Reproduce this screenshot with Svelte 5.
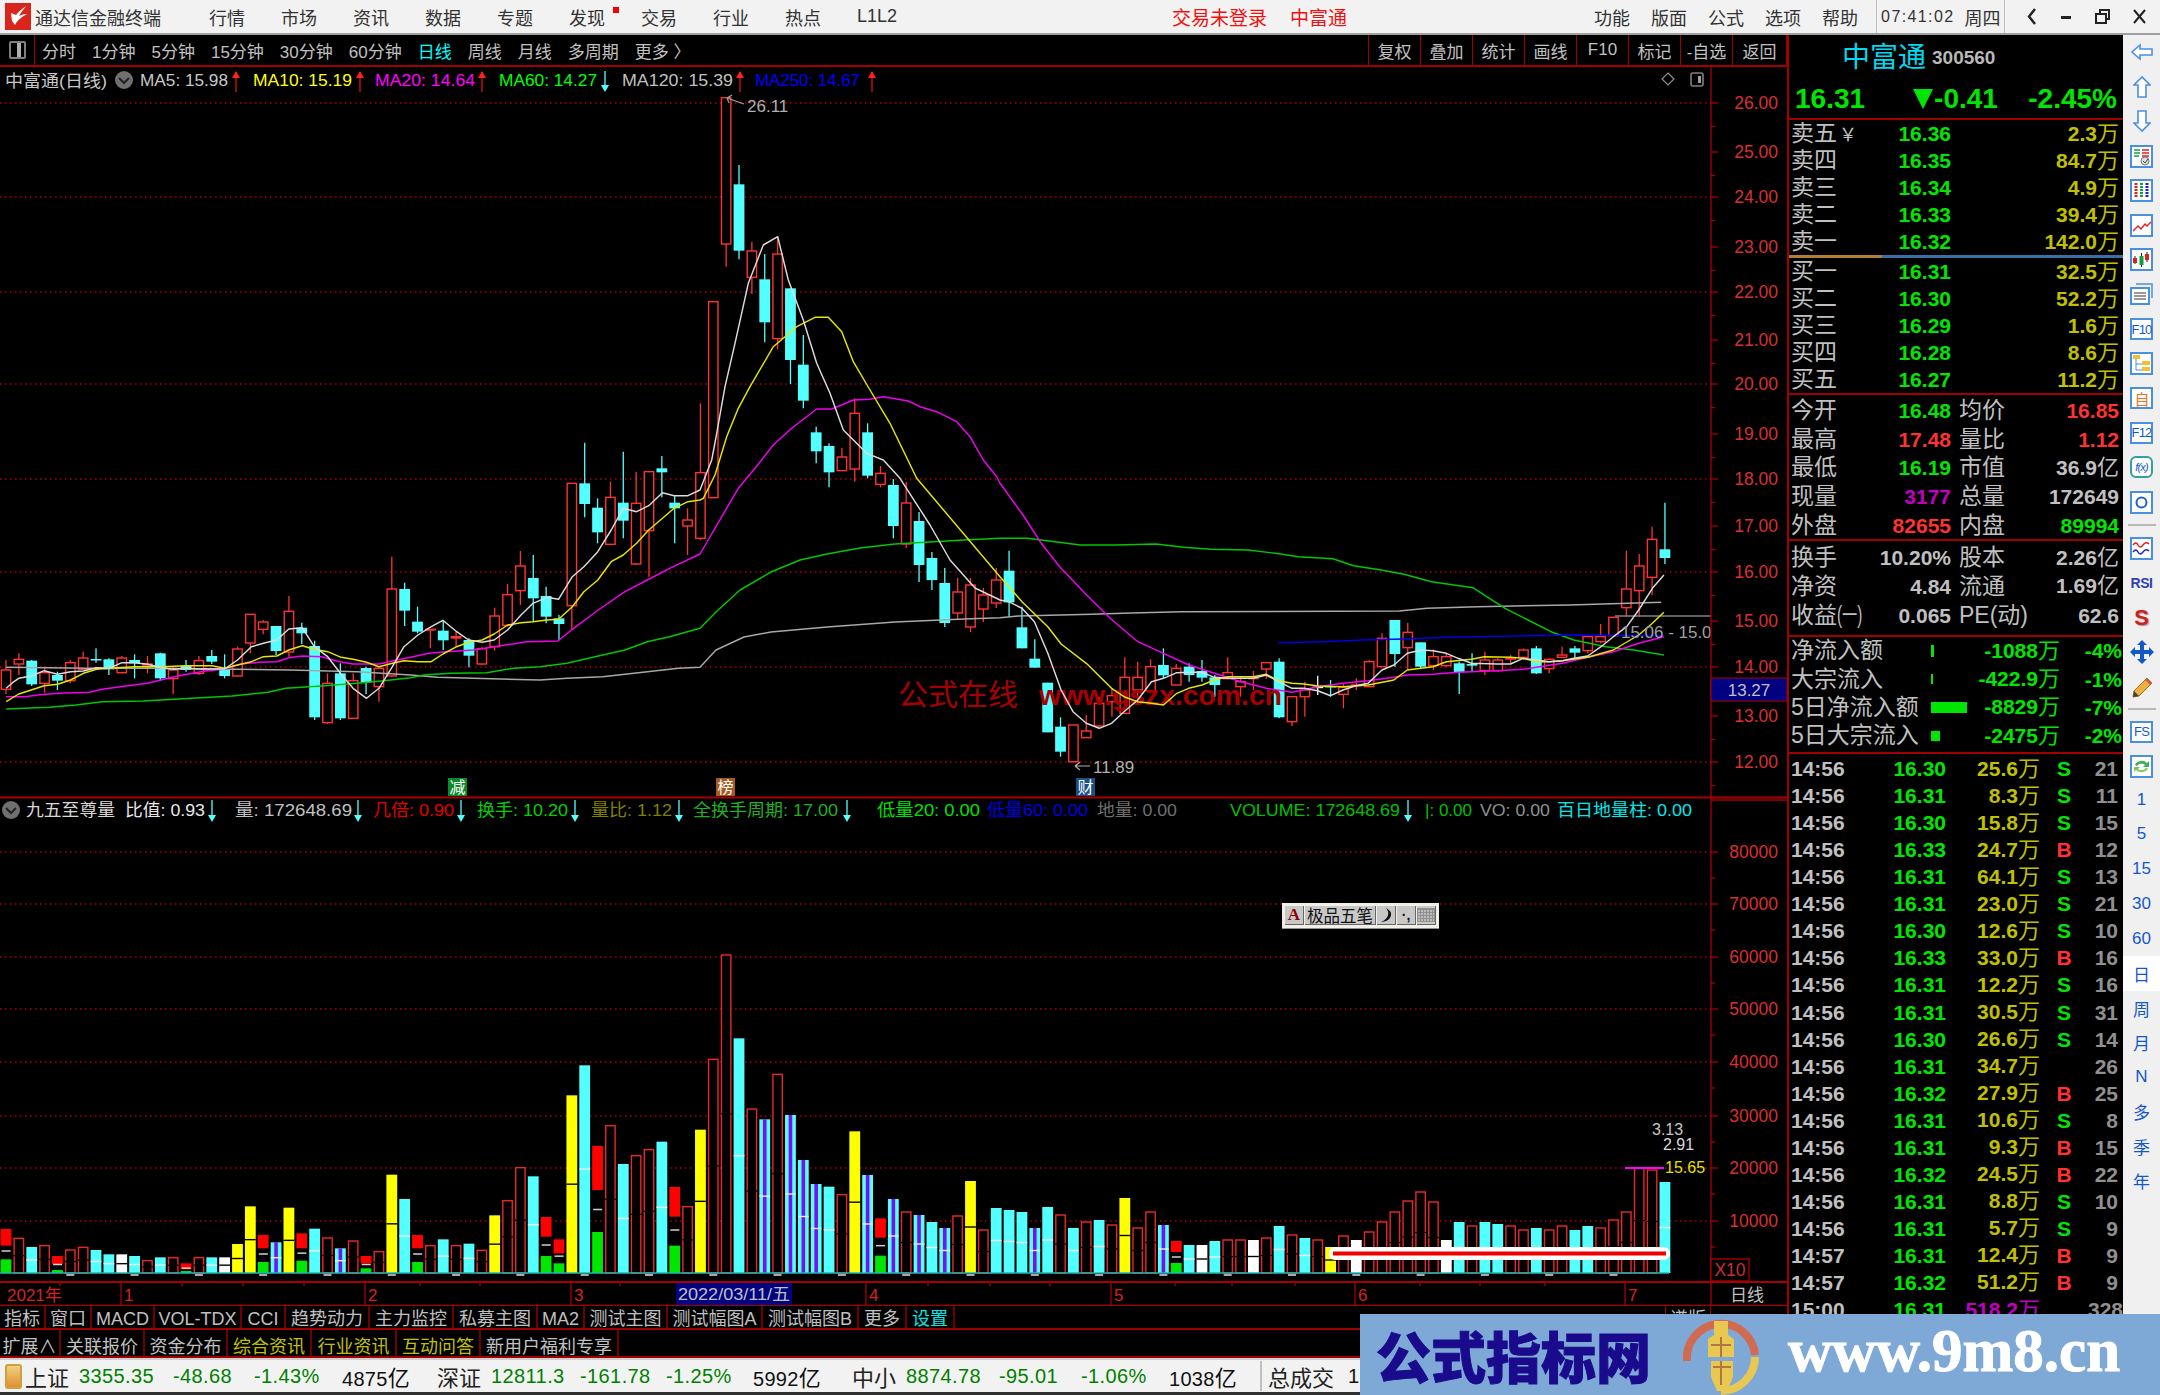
<script>
  // pixel helpers: candle x position and the price / volume grids
  const cx = (i) => 6 + i * 12.86;

  function sec(base, scale, rows) {
    return rows.map(([c, hi, top, bot, lo]) => ({
      c, hi: base + hi * scale, top: base + top * scale, bot: base + bot * scale, lo: base + lo * scale
    }));
  }

  const candles = [
    ...sec(440, 1 / 3, [
      [0,660,690,748,762],[0,640,658,672,705],[1,660,662,733,738],[0,680,698,730,758],[1,695,705,722,750],
      [0,660,668,722,730],[0,635,654,688,690],[1,625,657,660,668],[1,655,658,688,705],[0,648,654,698,700],
      [1,643,660,670,715],[0,648,672,675,700],[1,638,640,715,722],[0,678,690,716,762],[1,660,677,690,695],
      [0,648,662,700,705],[1,630,648,665,672],[1,643,690,708,715],[0,620,627,708,710],[0,522,523,609,640],
      [0,540,546,568,583],[1,558,558,633,645],[0,468,514,636,650],[1,548,563,580,612],[1,602,618,832,840],
      [0,700,730,848,852],[1,670,700,835,840],[0,700,722,835,835],[1,680,684,728,762],[0,680,685,740,785],
      [0,350,447,708,712],[1,428,447,512,558],[1,500,545,575,580],[0,568,568,570,625],[1,540,572,601,630],
      [0,575,590,594,620],[1,595,600,647,682],[0,622,626,672,675],[0,503,528,620,632],[0,432,464,556,560],
      [0,333,378,452,495],[1,345,414,475,545],[1,440,468,530,550],[1,525,535,552,600],[0,130,130,497,568],
      [1,8,130,192,232],[1,175,203,277,310],[0,125,172,313,315],[1,35,188,242,295],[0,95,190,372,375],
      [0,95,95,272,410],[1,48,85,97,172],[1,165,188,205,310],[0,205,240,258,345],[0,-110,98,295,300]
    ]),
    ...sec(80, 1 / 3, [
      [0,665,665,1253,1255],[0,53,53,492,560],[1,255,313,512,538],[0,485,513,592,642],[1,522,598,727,787],
      [0,470,522,776,808],[1,625,625,840,912],[1,765,854,962,985],[1,1040,1057,1114,1150],[1,1090,1098,1177,1222],
      [0,1103,1131,1172,1172],[0,955,1000,1167,1205],[1,1030,1057,1187,1195],[0,1158,1180,1213,1222],[1,1197,1215,1338,1375]
    ]),
    ...sec(0, 1, [
      [0,482,503,544,548],[1,512,521,565,582],[1,552,558,580,590],[1,568,583,623,627],
      [0,578,592,613,620],[0,578,585,627,632],[0,588,595,609,622],[0,568,580,603,608]
    ]),
    ...sec(440, 1 / 3, [
      [1,332,392,487,530],[1,500,562,625,625],[1,598,656,683,683],[1,728,728,877,877],[1,832,860,935,950],
      [0,855,855,965,968],[0,825,873,893,893],[0,770,790,858,860],[0,745,767,785,830],[0,652,712,820,822],
      [0,665,712,750,790],[0,658,680,752,755],[1,625,675,706,715],[0,672,685,735,735],[1,670,680,705,725],
      [1,660,693,713,725],[1,705,712,735,770],[0,652,698,716,718],[0,708,725,740,770],[0,693,715,716,750],
      [0,665,668,687,716],[1,655,665,832,835],[0,768,770,845,858],[0,725,750,770,830],[2,707,740,742,765],
      [1,720,738,742,770],[0,733,742,763,805],[0,715,735,737,750],[0,660,665,740,742],[0,580,595,680,682],
      [1,540,540,642,680],[0,548,577,623,688],[1,607,607,680,685],[0,628,650,677,690],[0,640,650,677,680],
      [1,665,670,697,762],[1,640,672,677,695],[0,635,660,692,705],[0,655,660,692,695],[0,645,655,657,670],
      [0,625,630,652,660],[1,618,625,700,702],[0,655,658,686,700],[0,620,645,652,655],[1,618,625,638,655],
      [0,590,590,632,640],[0,552,590,605,610],[0,530,532,587,590],[0,332,447,503,530],[0,342,378,452,530],
      [0,260,298,412,465],[1,188,328,354,372]
    ])
  ];

  // polylines are read off three zoom windows, so each part has its own mapping
  const p10 = (a) => a.map(([x, y]) => [x / 2.24, 440 + y / 3]);
  const p9 = (a) => a.map(([x, y]) => [600 + x / 3, 80 + y / 3]);
  const p11 = (a) => a.map(([x, y]) => [1000 + x / 2.178, 440 + y / 3]);

  function stitch(...parts) {
    const out = [];
    for (const part of parts) {
      for (const pt of part) {
        if (!out.length || pt[0] > out[out.length - 1][0]) out.push(pt);
      }
    }
    return out.map(([x, y]) => x.toFixed(1) + ',' + y.toFixed(1)).join(' ');
  }

  const lines = [
    { color: '#a8a8a8', points: stitch(
      p10([[14,682],[200,685],[350,685],[650,690],[800,695],[920,705],[980,712],[1060,715],[1210,720],[1270,715],[1350,710],[1420,700],[1520,685],[1568,682]]),
      [[716,650],[744,637],[771,632],[827,627],[895,622],[964,619]],
      p11([[0,533],[40,528],[200,523],[285,519],[395,515],[870,513],[930,505],[1040,500],[1240,495],[1440,487]])
    ) },
    { color: '#00c800', points: stitch(
      p10([[14,807],[110,802],[170,795],[229,785],[320,783],[430,775],[520,768],[600,757],[640,745],[720,738],[800,730],[860,722],[920,713],[950,705],[1010,700],[1090,698],[1150,685],[1210,680],[1270,670],[1340,648],[1400,630],[1450,605],[1500,590],[1568,565]]),
      [[716,612],[740,590],[771,572],[800,560],[827,554],[860,548],[895,544],[964,540]],
      p11([[0,295],[60,295],[120,305],[175,315],[250,315],[340,312],[400,322],[460,328],[540,330],[600,340],[650,350],[725,356],[770,377],[830,390],[880,403],[940,425],[1030,443],[1060,470],[1100,505],[1150,540],[1200,575],[1250,600],[1320,620],[1380,630],[1446,645]])
    ) },
    { color: '#0000e0', points: stitch(p11([[605,608],[705,605],[790,600],[880,597],[980,592],[1155,587],[1250,585],[1446,587]])) },
    { color: '#f000f0', points: stitch(
      p10([[14,770],[56,770],[85,765],[129,760],[200,757],[229,748],[270,740],[330,730],[400,707],[460,693],[500,688],[540,672],[580,667],[620,665],[647,653],[677,648],[720,650],[760,665],[791,672],[850,672],[879,663],[920,652],[960,640],[1000,635],[1060,630],[1100,622],[1180,605],[1250,603],[1282,568],[1340,510],[1400,455],[1450,420],[1500,385],[1568,342]]),
      p9([[415,1225],[465,1165],[520,1095],[575,1045],[650,987],[695,987],[760,960],[810,958],[850,950],[925,963],[960,980],[1010,995],[1070,1025],[1110,1070],[1150,1140],[1190,1190]]),
      p11([[0,130],[50,225],[90,310],[130,380],[185,460],[240,535],[300,605],[356,640],[411,675],[467,700],[525,725],[580,745],[636,757],[692,740],[747,730],[802,722],[858,712],[887,705],[943,703],[998,697],[1083,692],[1139,688],[1168,682],[1225,670],[1280,652],[1336,635],[1391,610],[1446,590]])
    ) },
    { color: '#e6e600', points: stitch(
      p10([[14,785],[42,762],[70,750],[99,737],[129,733],[158,720],[187,700],[216,688],[244,685],[301,680],[361,680],[418,677],[475,677],[503,685],[532,675],[563,665],[590,650],[620,648],[647,630],[677,617],[704,628],[734,635],[764,652],[791,658],[821,667],[849,680],[879,670],[905,662],[936,665],[966,665],[992,642],[1023,620],[1050,607],[1080,600],[1107,582],[1137,555],[1167,548],[1194,545],[1225,540],[1251,538],[1282,500],[1308,455],[1339,420],[1369,365],[1396,345],[1426,310],[1453,270],[1484,235],[1510,205],[1541,185],[1568,180]]),
      p9([[310,1255],[345,1185],[380,1070],[415,985],[450,920],[520,800],[590,740],[645,712],[685,712],[725,755],[760,845],[810,930],[870,1030],[950,1195]]),
      p11([[0,410],[48,485],[104,560],[133,612],[188,670],[243,745],[270,770],[300,785],[330,790],[356,795],[385,760],[411,745],[440,735],[467,720],[496,710],[552,710],[580,703],[607,722],[636,730],[662,732],[692,738],[747,740],[802,735],[858,720],[887,690],[917,685],[943,680],[972,665],[1027,658],[1055,650],[1112,652],[1139,655],[1168,665],[1196,665],[1225,662],[1280,652],[1336,630],[1391,585],[1421,550],[1446,517]])
    ) },
    { color: '#dcdcdc', points: stitch(
      p10([[14,745],[28,728],[42,715],[70,708],[99,692],[129,703],[158,695],[187,693],[216,683],[244,685],[273,668],[301,668],[331,673],[361,683],[389,688],[418,685],[446,687],[475,687],[503,687],[532,660],[563,620],[590,610],[620,600],[647,567],[677,563],[704,620],[734,650],[764,703],[791,745],[821,775],[849,745],[879,680],[905,620],[936,585],[966,560],[992,541],[1023,575],[1050,600],[1080,607],[1107,600],[1137,570],[1167,525],[1194,490],[1225,472],[1251,478],[1282,410],[1308,380],[1339,335],[1369,270],[1396,205],[1426,215],[1453,197],[1484,158],[1510,167],[1541,167],[1568,150]]),
      p9([[335,1140],[350,1060],[375,920],[405,790],[445,610],[490,495],[533,470],[565,600],[610,720],[650,850],[690,940],[730,1050],[800,1120],[850,1140],[900,1195]]),
      [[930,525],[950,560],[975,588]],
      p11([[0,480],[19,485],[48,505],[75,545],[104,640],[133,750],[159,815],[188,850],[216,865],[243,850],[270,815],[300,780],[330,725],[356,715],[385,698],[411,697],[440,697],[467,712],[496,715],[552,715],[580,705],[607,725],[636,745],[662,745],[692,752],[720,767],[747,750],[775,737],[802,730],[832,690],[858,675],[887,640],[917,630],[943,632],[972,640],[998,655],[1027,670],[1083,672],[1112,672],[1139,655],[1168,660],[1196,665],[1225,662],[1250,655],[1280,648],[1309,620],[1336,590],[1365,560],[1391,510],[1421,445],[1446,405]])
    ) }
  ];

  // volume bars: type letter + top (R also has end of red part, start of green part)
  function parseBars(base, scale, str) {
    return str.split(' ').map((s) => {
      const nums = s.slice(1).split(',').map((n) => base + Number(n) * scale);
      return { t: s[0], top: nums[0], redEnd: nums[1], green: nums[2] };
    });
  }
  const bars = [
    ...parseBars(1000, 1 / 3, 'R687,737,778 r715 c741 r737 R768,792,810 r750 r742 c750 c763 w763 c768 r782 c772 r773 R790,808,813 r773 c772 w772 y732 y619 R705,745,786 p727 y623 R700,745,782 c686 r714 p745 r723 R768,790,805 r755 y524 c597 R705,745,786 r737 c718 r737 c731 r751 y646 r602 r503 c529 R651,710,768 R718,760,790 y286 c196 R438,570,696 r377 c492 r467 r449 c425 R561,650,737 r620 y389 r178 r-135 c115 r327 p358 r223 p345 p480 p552 c560 r584 y394 p525 R655,713,767 p597'),
    ...parseBars(0, 1, 'r1212 p1215 c1222 p1228 r1216 y1181 r1230 c1208 c1210 c1212 p1228 c1207 r1215 c1228 r1222 c1220 r1225 y1198 r1228 r1212 p1225 R1241,1252,1263 c1245 w1245 c1241 r1240 r1240 w1240 r1238 c1226 r1235 c1238 r1240 y1247 r1236 w1240 r1232 r1222 r1212 r1201 r1192 r1202 w1240 c1222 r1226 c1222 c1224 r1226 r1230 c1228 r1230 r1226 c1230 c1226 r1228 r1220 r1212 r1168 r1170 c1182')
  ];
  const baseY = 1273;
  const barColors = { c: '#54ffff', y: '#ffff00', w: '#ffffff', p: '#54ffff' };

  const priceGrid = [103, 197, 292, 384, 479, 572, 667, 762];
  const volGrid = [852, 904, 957, 1009, 1062, 1116, 1168, 1221];
  const priceYs = [103, 152, 197, 247, 292, 340, 384, 434, 479, 526, 572, 621, 667, 716, 762];
  const priceLabels = ['26.00','25.00','24.00','23.00','22.00','21.00','20.00','19.00','18.00','17.00','16.00','15.00','14.00','13.00','12.00']
    .map((t, i) => ({ t, y: priceYs[i] }));
  const volLabels = ['80000','70000','60000','50000','40000','30000','20000','10000'].map((t, i) => ({ t, y: volGrid[i] }));

  const maLegend = [
    { x: 140, w: 88, text: 'MA5: 15.98', color: '#c8c8c8', ax: 236, up: true },
    { x: 253, w: 99, text: 'MA10: 15.19', color: '#ffff00', ax: 360, up: true },
    { x: 375, w: 100, text: 'MA20: 14.64', color: '#ff00ff', ax: 482, up: true },
    { x: 499, w: 98, text: 'MA60: 14.27', color: '#00ff00', ax: 605, up: false },
    { x: 622, w: 111, text: 'MA120: 15.39', color: '#c0c0c0', ax: 740, up: true },
    { x: 755, w: 105, text: 'MA250: 14.67', color: '#0000ff', ax: 872, up: true }
  ];
  const volLegend = [
    { x: 26, w: 89, text: '九五至尊量', color: '#d8d8d8' },
    { x: 125, w: 80, text: '比值: 0.93', color: '#e8e8e8', ax: 212 },
    { x: 235, w: 117, text: '量: 172648.69', color: '#c0c0c0', ax: 358 },
    { x: 373, w: 81, text: '几倍: 0.90', color: '#e00000', ax: 461 },
    { x: 477, w: 91, text: '换手: 10.20', color: '#00d000', ax: 575 },
    { x: 591, w: 81, text: '量比: 1.12', color: '#808000', ax: 679 },
    { x: 693, w: 145, text: '全换手周期: 17.00', color: '#20b020', ax: 847 },
    { x: 877, w: 103, text: '低量20: 0.00', color: '#00e000' },
    { x: 987, w: 101, text: '低量60: 0.00', color: '#0000e0' },
    { x: 1097, w: 80, text: '地量: 0.00', color: '#707070' },
    { x: 1230, w: 170, text: 'VOLUME: 172648.69', color: '#00c000', ax: 1408 },
    { x: 1425, w: 47, text: '|: 0.00', color: '#00c000' },
    { x: 1480, w: 70, text: 'VO: 0.00', color: '#909090' },
    { x: 1557, w: 135, text: '百日地量柱: 0.00', color: '#00e8e8' }
  ];
  const months = [{ x: 121, t: '1' }, { x: 365, t: '2' }, { x: 571, t: '3' }, { x: 866, t: '4' }, { x: 1111, t: '5' }, { x: 1355, t: '6' }, { x: 1625, t: '7' }];
  const minorTicks = [60, 182, 243, 304, 420, 480, 620, 700, 760, 928, 990, 1050, 1175, 1232, 1295, 1420, 1480, 1545];

  const menu = ['行情', '市场', '资讯', '数据', '专题', '发现', '交易', '行业', '热点', 'L1L2'];
  const periods = ['分时', '1分钟', '5分钟', '15分钟', '30分钟', '60分钟', '日线', '周线', '月线', '多周期', '更多 〉'];
  const chartTools = ['复权', '叠加', '统计', '画线', 'F10', '标记', '-自选', '返回'];
  const tabsA = [['指标', 46], ['窗口', 46], ['MACD', 63], ['VOL-TDX', 87], ['CCI', 44], ['趋势动力', 84], ['主力监控', 84], ['私募主图', 84], ['MA2', 47], ['测试主图', 83], ['测试幅图A', 95], ['测试幅图B', 96], ['更多', 48], ['设置', 48]];
  const tabsB = [['扩展∧', 61], ['关联报价', 84], ['资金分布', 83], ['综合资讯', 84], ['行业资讯', 85], ['互动问答', 84], ['新用户福利专享', 138]];

  const asks = [['卖五', '16.36', '2.3'], ['卖四', '16.35', '84.7'], ['卖三', '16.34', '4.9'], ['卖二', '16.33', '39.4'], ['卖一', '16.32', '142.0']];
  const bids = [['买一', '16.31', '32.5'], ['买二', '16.30', '52.2'], ['买三', '16.29', '1.6'], ['买四', '16.28', '8.6'], ['买五', '16.27', '11.2']];
  const stats = [
    ['今开', '16.48', 'up0', '均价', '16.85', 'red'],
    ['最高', '17.48', 'red', '量比', '1.12', 'red'],
    ['最低', '16.19', 'up0', '市值', '36.9', 'gray', '亿'],
    ['现量', '3177', 'mag', '总量', '172649', 'gray'],
    ['外盘', '82655', 'red', '内盘', '89994', 'up0']
  ];
  const stats2 = [
    ['换手', '10.20%', '股本', '2.26', '亿'],
    ['净资', '4.84', '流通', '1.69', '亿'],
    ['收益', '0.065', 'PE(动)', '62.6', '']
  ];
  const flows = [
    ['净流入额', 3, 12, '-1088', '-4%'],
    ['大宗流入', 2, 10, '-422.9', '-1%'],
    ['5日净流入额', 36, 11, '-8829', '-7%'],
    ['5日大宗流入', 9, 10, '-2475', '-2%']
  ];
  const ticks = [
    ['14:56','16.30','25.6','S',21],['14:56','16.31','8.3','S',11],['14:56','16.30','15.8','S',15],['14:56','16.33','24.7','B',12],
    ['14:56','16.31','64.1','S',13],['14:56','16.31','23.0','S',21],['14:56','16.30','12.6','S',10],['14:56','16.33','33.0','B',16],
    ['14:56','16.31','12.2','S',16],['14:56','16.31','30.5','S',31],['14:56','16.30','26.6','S',14],['14:56','16.31','34.7','',26],
    ['14:56','16.32','27.9','B',25],['14:56','16.31','10.6','S',8],['14:56','16.31','9.3','B',15],['14:56','16.32','24.5','B',22],
    ['14:56','16.31','8.8','S',10],['14:56','16.31','5.7','S',9],['14:57','16.31','12.4','B',9],['14:57','16.32','51.2','B',9],
    ['15:00','16.31','518.2','',328]
  ];
  const periodBtns = [
    { t: '1', h: 34 }, { t: '5', h: 34 }, { t: '15', h: 36 }, { t: '30', h: 34 }, { t: '60', h: 35 },
    { t: '日', h: 35, on: true }, { t: '周', h: 34 }, { t: '月', h: 35 }, { t: 'N', h: 34 }, { t: '多', h: 35 }, { t: '季', h: 34 }, { t: '年', h: 34 }
  ];
  const indexes = [
    { name: '上证', w: 412, vals: [['3355.35', 77], ['-48.68', 64], ['-1.43%', 71]], amt: '4875' },
    { name: '深证', w: 415, vals: [['12811.3', 72], ['-161.78', 69], ['-1.25%', 70]], amt: '5992' },
    { name: '中小', w: 408, vals: [['8874.78', 76], ['-95.01', 65], ['-1.06%', 71]], amt: '1038' }
  ];
</script>

<div class="app">
  <header class="menubar">
    <svg class="logo" width="26" height="27" viewBox="0 0 26 27">
      <rect width="26" height="27" fill="#d8261c" />
      <path d="M21 3 C17 6 13 9 11 12 L6 10 L7 18 L10 22 C12 18 15 15 22 11 C18 11 16 12 14 13 C16 9 19 6 21 3 Z" fill="#fff" />
    </svg>
    <span class="apptitle">通达信金融终端</span>
    <nav class="menu">
      {#each menu as m}
        <span class="menuitem">{m}{#if m === '发现'}<i class="reddot"></i>{/if}</span>
      {/each}
    </nav>
    <span class="login">交易未登录</span>
    <span class="login stock">中富通</span>
    <nav class="menu2">
      {#each ['功能', '版面', '公式', '选项', '帮助'] as m}<span>{m}</span>{/each}
    </nav>
    <div class="clock"><span class="time">07:41:02</span><span>周四</span></div>
    <div class="winbtns">
      <svg width="10" height="17" viewBox="0 0 10 17"><path d="M8 1L2 8.500 8 16" fill="none" stroke="#222" stroke-width="2.400" /></svg>
      <svg width="12" height="12" viewBox="0 0 12 12"><rect x="1" y="5" width="10" height="3" fill="#222" /></svg>
      <svg width="15" height="15" viewBox="0 0 15 15"><path d="M5 1h9v9h-3v4H1V5h4z" fill="none" stroke="#222" stroke-width="2" /><path d="M5 5h6v5" fill="none" stroke="#222" stroke-width="2" /></svg>
      <svg width="13" height="15" viewBox="0 0 13 15"><path d="M1 1l11 13M12 1L1 14" stroke="#222" stroke-width="2" fill="none" /></svg>
    </div>
  </header>

  <div class="main">
    <section class="left">
      <div class="toolbar">
        <div class="framebtn"><span class="frameicon"></span></div>
        <div class="periods">
          {#each periods as p}<span class:active={p === '日线'}>{p}</span>{/each}
        </div>
        <div class="charttools">
          {#each chartTools as t}<span>{t}</span>{/each}
        </div>
      </div>

      <svg class="chart" width="1787" height="1239" viewBox="0 67 1787 1239">
        <defs><clipPath id="plot"><rect x="0" y="67" width="1711" height="1239" /></clipPath></defs>
        {#each priceGrid as y}<line x1="0" x2="1711" y1={y} y2={y} class="grid" />{/each}
        {#each volGrid as y}<line x1="0" x2="1711" y1={y} y2={y} class="grid" />{/each}

        <!-- candles -->
        {#each candles as k, i}
          <line x1={cx(i)} x2={cx(i)} y1={k.hi} y2={k.lo} stroke={k.c === 1 ? '#54ffff' : k.c === 2 ? '#fff' : '#ff3232'} stroke-width="1.3" />
          {#if k.c === 0}
            <rect x={cx(i) - 4.7} y={k.top} width="9.4" height={k.bot - k.top} fill="#000" stroke="#ff3232" stroke-width="1.4" />
          {:else}
            <rect x={cx(i) - 5.4} y={k.top} width="10.8" height={Math.max(k.bot - k.top, 1.5)} fill={k.c === 1 ? '#54ffff' : '#fff'} />
          {/if}
        {/each}

        <text x="898" y="705" class="wm1">公式在线</text>
        <text x="1039" y="705" class="wm2" textLength="243" lengthAdjust="spacingAndGlyphs">www.gszx.com.cn</text>

        <line x1="1615" x2="1711" y1="616" y2="616" stroke="#808080" stroke-width="1.3" />
        {#each lines as l}
          <polyline points={l.points} fill="none" stroke={l.color} stroke-width="1.45" stroke-linejoin="round" />
        {/each}

        <path d="M727 98 L744 104 M727 98 l5 -3 M727 98 l2 5" stroke="#a0a0a0" fill="none" stroke-width="1.2" />
        <text x="747" y="112" class="t17" fill="#b0b0b0">26.11</text>
        <path d="M1075 766 H1090 M1075 766 l5 -4 M1075 766 l5 4" stroke="#b0b0b0" fill="none" stroke-width="1.2" />
        <text x="1093" y="773" class="t17" fill="#b0b0b0">11.89</text>
        <text x="1621" y="638" class="t17" fill="#a0a0a0" clip-path="url(#plot)" textLength="100" lengthAdjust="spacingAndGlyphs">15.06 - 15.06</text>

        <rect x="448" y="778" width="19" height="18" fill="#0a8a28" />
        <text x="457.5" y="793" class="mark">减</text>
        <rect x="716" y="778" width="19" height="18" fill="#a55a20" />
        <text x="725.5" y="793" class="mark">榜</text>
        <rect x="1076" y="778" width="19" height="18" fill="#1c4f86" />
        <text x="1085.5" y="793" class="mark">财</text>

        <!-- legends -->
        <text x="5" y="87" class="cn" fill="#c8c8c8" textLength="102" lengthAdjust="spacingAndGlyphs">中富通(日线)</text>
        <circle cx="124" cy="80" r="9" fill="#707070" />
        <path d="M119 78l5 5 5-5" stroke="#222" stroke-width="2" fill="none" />
        {#each maLegend as m}
          <text x={m.x} y="86" class="t17" fill={m.color} textLength={m.w} lengthAdjust="spacingAndGlyphs">{m.text}</text>
          {#if m.up}
            <path d="M{m.ax} 92V72" stroke="#e01010" stroke-width="1.3" /><path d="M{m.ax - 4} 78L{m.ax} 71L{m.ax + 4} 78Z" fill="#ff2020" />
          {:else}
            <path d="M{m.ax} 71V90" stroke="#54ffff" stroke-width="1.3" /><path d="M{m.ax - 4} 85L{m.ax} 92L{m.ax + 4} 85Z" fill="#54ffff" />
          {/if}
        {/each}
        <path d="M1668 73l6 6-6 6-6-6z" fill="none" stroke="#909090" stroke-width="1.2" />
        <rect x="1691" y="73" width="12" height="13" rx="2" fill="none" stroke="#808080" stroke-width="1.6" />
        <rect x="1698" y="76" width="3" height="7" fill="#a0a0a0" />

        <circle cx="11" cy="810" r="9" fill="#707070" />
        <path d="M6 808l5 5 5-5" stroke="#222" stroke-width="2" fill="none" />
        {#each volLegend as m}
          <text x={m.x} y="816" class="t17" fill={m.color} textLength={m.w} lengthAdjust="spacingAndGlyphs">{m.text}</text>
          {#if m.ax}
            <path d="M{m.ax} 800V819" stroke="#54ffff" stroke-width="1.3" /><path d="M{m.ax - 4} 815L{m.ax} 822L{m.ax + 4} 815Z" fill="#54ffff" />
          {/if}
        {/each}

        <!-- volume bars -->
        {#each bars as b, i}
          {@const x = cx(i) - 5.4}
          {@const mid = (b.top + baseY) / 2}
          {#if b.t === 'r'}
            <rect x={x + 0.7} y={b.top} width="9.4" height={baseY - b.top} fill="#000" stroke="#e82828" stroke-width="1.4" />
            <line x1={x} x2={x + 11} y1={mid} y2={mid} stroke="#000" stroke-width="1.2" />
          {:else if b.t === 'R'}
            <rect x={x} y={b.top} width="10.8" height={b.redEnd - b.top} fill="#ff0000" />
            <rect x={x} y={b.green} width="10.8" height={baseY - b.green} fill="#00e600" />
            <line x1={x + 1} x2={x + 10} y1={mid} y2={mid} stroke="#d0d0d0" stroke-width="1.5" />
          {:else}
            <rect x={x} y={b.top} width="10.8" height={baseY - b.top} fill={barColors[b.t]} />
            {#if b.t === 'p'}<rect x={x + 3.6} y={b.top} width="3.6" height={baseY - b.top} fill="#7a10f0" />{/if}
            <line x1={x} x2={x + 10.8} y1={mid} y2={mid} stroke={b.t === 'c' || b.t === 'p' ? '#f0f0f0' : '#000'} stroke-width="1.4" />
          {/if}
          {#if i % 5 === 0 && i > 0}
            <line x1={cx(i) - 4} x2={cx(i) + 4} y1="1275" y2="1275" stroke="#e0e0e0" stroke-width="1.5" />
          {/if}
        {/each}
        <line x1="0" x2="1669" y1="1273" y2="1273" stroke="#20b8b8" stroke-width="1.4" />

        <rect x="1329" y="1247" width="341" height="13" rx="6" fill="#ffffff" />
        <rect x="1333" y="1251.5" width="333" height="4" fill="#f00000" />
        <line x1="1625" x2="1664" y1="1168" y2="1168" stroke="#ff00ff" stroke-width="1.8" />
        <text x="1652" y="1135" class="t16" fill="#c8c8c8">3.13</text>
        <text x="1663" y="1150" class="t16" fill="#d8d8d8">2.91</text>
        <text x="1665" y="1173" class="t16" fill="#e0e000">15.65</text>

        <!-- right axis -->
        <line x1="1711" x2="1711" y1="67" y2="1306" class="axis" />
        <line x1="0" x2="1787" y1="797.5" y2="797.5" class="axis thick" />
        <line x1="1711" x2="1787" y1="800" y2="800" class="axis" />
        {#each priceLabels as l}
          <line x1="1711" x2="1718" y1={l.y} y2={l.y} class="axis" />
          <line x1="1711" x2="1715" y1={l.y + 23.5} y2={l.y + 23.5} class="axis" />
          <text x="1778" y={l.y + 6} class="axlabel">{l.t}</text>
        {/each}
        {#each volLabels as l}
          <line x1="1711" x2="1718" y1={l.y} y2={l.y} class="axis" />
          <line x1="1711" x2="1715" y1={l.y + 26} y2={l.y + 26} class="axis" />
          <text x="1778" y={l.y + 6} class="axlabel">{l.t}</text>
        {/each}
        <rect x="1711" y="678" width="76" height="23" fill="#000080" stroke="#b00000" />
        <text x="1749" y="696" class="t17 mid" fill="#c0c0c0">13.27</text>
        <rect x="1711" y="1259" width="38" height="22" fill="#000" stroke="#b00000" stroke-width="1.3" />
        <text x="1730" y="1276" class="axlabel mid" fill="#c83030">X10</text>

        <!-- date axis -->
        <line x1="0" x2="1787" y1="1282" y2="1282" class="axis thick" />
        <line x1="0" x2="1787" y1="1305.5" y2="1305.5" class="axis" />
        {#each minorTicks as x}<line x1={x} x2={x} y1="1282" y2="1286" class="axis" />{/each}
        <text x="7" y="1301" class="date">2021年</text>
        {#each months as m}
          <line x1={m.x} x2={m.x} y1="1282" y2="1306" class="axis" />
          <text x={m.x + 3} y="1301" class="date">{m.t}</text>
        {/each}
        <rect x="676" y="1283" width="116" height="22" fill="#000080" />
        <text x="678" y="1300" class="t17" fill="#c0c0c0" textLength="112" lengthAdjust="spacingAndGlyphs">2022/03/11/五</text>
        <text x="1747" y="1301" class="cn mid" fill="#c0c0c0">日线</text>
      </svg>

      <div class="tabs">
        {#each tabsA as [t, w]}<span class:cyan={t === '设置'} style="width:{w}px">{t}</span>{/each}
        <span class="hidden-tab">谱版</span>
      </div>
      <div class="tabs second">
        {#each tabsB as [t, w], i}<span class:olive={i >= 3 && i <= 5} style="width:{w}px">{t}</span>{/each}
      </div>
    </section>

    <aside class="panel">
      <div class="name"><span class="zh">中富通</span><span class="code">300560</span></div>
      <div class="last">
        <span class="big">16.31</span>
        <span class="big chg"><i class="tri"></i>-0.41</span>
        <span class="big">-2.45%</span>
      </div>
      {#each asks as r, i}
        <div class="order"><span class="lbl">{r[0]}{#if i === 0}<em class="yen">￥</em>{/if}</span><b class="up0">{r[1]}</b><b class="vol">{r[2]}<span class="wan">万</span></b></div>
      {/each}
      <div class="split"></div>
      {#each bids as r}
        <div class="order"><span class="lbl">{r[0]}</span><b class="up0">{r[1]}</b><b class="vol">{r[2]}<span class="wan">万</span></b></div>
      {/each}
      <div class="stats line">
        {#each stats as r}
          <div class="stat"><span class="lbl">{r[0]}</span><b class={r[2]}>{r[1]}</b><span class="lbl l2">{r[3]}</span><b class={r[5]}>{r[4]}{#if r[6]}<span class="wan">{r[6]}</span>{/if}</b></div>
        {/each}
      </div>
      <div class="stats line extra">
        {#each stats2 as r, i}
          <div class="stat"><span class="lbl">{r[0]}{#if i === 2}<span class="paren">(一)</span>{/if}</span><b class="gray">{r[1]}</b><span class="lbl l2">{r[2]}</span><b class="gray">{r[3]}{#if r[4]}<span class="wan">{r[4]}</span>{/if}</b></div>
        {/each}
      </div>
      <div class="flows line">
        {#each flows as r}
          <div class="flow"><span class="lbl">{r[0]}</span><span class="barcell"><i style="width:{r[1]}px;height:{r[2]}px"></i></span><b class="up0">{r[3]}<span class="wan">万</span></b><b class="up0">{r[4]}</b></div>
        {/each}
      </div>
      <div class="ticks line">
        {#each ticks as r, i}
          <div class="tick">
            <b class="gray">{r[0]}</b>
            <b class="up0">{r[1]}</b>
            <b class={i === 20 ? 'mag' : 'yel'}>{r[2]}<span class="wan">万</span></b>
            <b class={r[3] === 'B' ? 'red' : 'up0'}>{r[3]}</b>
            <b class="dim">{r[4]}</b>
          </div>
        {/each}
      </div>
    </aside>

    <aside class="tools">
      <span class="tool"><svg width="24" height="18" viewBox="0 0 24 18"><path d="M10 2L2 9l8 7v-4h12V6H10z" fill="#fff" stroke="#4a90e0" stroke-width="1.6" /></svg></span>
      <span class="tool"><svg width="18" height="24" viewBox="0 0 18 24"><path d="M9 2L1 10h4v12h8V10h4z" fill="#fff" stroke="#4a90e0" stroke-width="1.6" /></svg></span>
      <span class="tool"><svg width="18" height="24" viewBox="0 0 18 24"><path d="M9 22L1 14h4V2h8v12h4z" fill="#fff" stroke="#4a90e0" stroke-width="1.6" /></svg></span>
      <span class="tool"><svg width="23" height="23" viewBox="0 0 23 23"><rect x="1" y="1" width="21" height="21" class="ibox" /><path d="M4 5h6M4 8h6M4 11h5" stroke="#10a040" stroke-width="1.5" /><path d="M12 5h7M12 8h7M12 11h7" stroke="#e02020" stroke-width="1.5" /><circle cx="15" cy="16" r="4" fill="#ddd" stroke="#777" /><path d="M13 16l2 2 3-4" stroke="#444" fill="none" /></svg></span>
      <span class="tool"><svg width="23" height="23" viewBox="0 0 23 23"><rect x="1" y="1" width="21" height="21" class="ibox" /><path d="M6 4v15" stroke="#e02020" stroke-width="3" stroke-dasharray="2 1" /><path d="M11.500 4v15" stroke="#10a040" stroke-width="3" stroke-dasharray="2 1" /><path d="M17 4v15" stroke="#2020d0" stroke-width="3" stroke-dasharray="2 1" /></svg></span>
      <span class="tool"><svg width="23" height="23" viewBox="0 0 23 23"><rect x="1" y="1" width="21" height="21" class="ibox" /><path d="M3 17l5-5 3 3 4-5 2 2 4-4" stroke="#e02020" fill="none" stroke-width="1.4" /></svg></span>
      <span class="tool"><svg width="23" height="23" viewBox="0 0 23 23"><rect x="1" y="1" width="21" height="21" class="ibox" /><path d="M5 8v8M11.500 5v14M17 4v10" stroke="#222" /><rect x="3" y="10" width="4" height="5" fill="#e02020" /><rect x="9.500" y="8" width="4" height="9" fill="#10a040" /><rect x="15" y="6" width="4" height="6" fill="#e02020" /></svg></span>
      <span class="tool"><svg width="23" height="23" viewBox="0 0 23 23"><path d="M6 1h16v14" fill="none" stroke="#4a90e0" stroke-width="1.5" /><rect x="1" y="5" width="18" height="16" class="ibox" /><path d="M4 10h12M4 13h12M4 16h12" stroke="#777" stroke-width="1.5" /></svg></span>
      <span class="tool"><span class="tbox">F10</span></span>
      <span class="tool"><svg width="23" height="23" viewBox="0 0 23 23"><rect x="1" y="1" width="21" height="21" class="ibox" /><path d="M6 7v11h6M6 12h6" stroke="#4a90e0" fill="none" /><rect x="3" y="3" width="7" height="4" fill="#f0c030" /><rect x="12" y="9" width="8" height="4" fill="#f0c030" /><rect x="12" y="15" width="8" height="4" fill="#f0c030" /></svg></span>
      <span class="tool"><span class="tbox orange">自</span></span>
      <span class="tool"><span class="tbox">F12</span></span>
      <span class="tool"><span class="tbox fx">f(x)</span></span>
      <span class="tool"><svg width="23" height="23" viewBox="0 0 23 23"><rect x="1" y="1" width="21" height="21" class="ibox" /><circle cx="11.500" cy="11.500" r="5" fill="none" stroke="#2060d0" stroke-width="2" /></svg></span>
      <span class="sep"></span>
      <span class="tool"><svg width="23" height="23" viewBox="0 0 23 23"><rect x="1" y="1" width="21" height="21" class="ibox" /><path d="M3 8q3-4 5 0t5 0 6-1" stroke="#e02020" fill="none" stroke-width="1.4" /><path d="M3 15q3-4 5 0t5 0 6-1" stroke="#2020d0" fill="none" stroke-width="1.4" /></svg></span>
      <span class="tool"><span class="rsi">RSI</span></span>
      <span class="tool"><span class="sbig">S</span></span>
      <span class="tool"><svg width="26" height="26" viewBox="0 0 26 26"><path d="M13 1l5 5h-3v5h5V8l5 5-5 5v-3h-5v5h3l-5 5-5-5h3v-5H6v3l-5-5 5-5v3h5V6H8z" fill="#1458c8" /></svg></span>
      <span class="tool"><svg width="24" height="24" viewBox="0 0 24 24"><path d="M3 22l1-6L17 3l5 5L9 21z" fill="#f0b040" stroke="#a07020" /><path d="M17 3l5 5 -2 2-5-5z" fill="#d06040" /><path d="M3 22l1-6 5 5z" fill="#444" /></svg></span>
      <span class="sep second"></span>
      <span class="tool"><span class="tbox">FS</span></span>
      <span class="tool"><svg width="23" height="23" viewBox="0 0 23 23"><rect x="1" y="1" width="21" height="21" class="ibox" /><path d="M5 10a7 6 0 0 1 12-2l2-2v6h-6l2-2a5 4 0 0 0-8 1z" fill="#40b060" /><path d="M18 13a7 6 0 0 1-12 2l-2 2v-5h6l-2 2a5 4 0 0 0 8-1z" fill="#80c850" /></svg></span>
      {#each periodBtns as p}
        <span class="ptool" class:on={p.on} style="height:{p.h}px"><em>{p.t}</em></span>
      {/each}
    </aside>
  </div>

  <footer class="status">
    <span class="sicon"></span>
    {#each indexes as ix}
      <div class="idx" style="width:{ix.w}px">
        <span class="nm">{ix.name}</span>
        {#each ix.vals as [v, w]}<span class="g" style="width:{w}px">{v}</span>{/each}
        <span class="amt">{ix.amt}<span class="yi">亿</span></span>
      </div>
    {/each}
    <div class="total"><span class="nm">总成交</span><span class="amt">1</span></div>
  </footer>

  <!-- floating input-method bar -->
  <div class="ime">
    <span class="imebtn a">A</span>
    <span class="imebtn wide">极品五笔</span>
    <span class="imebtn"><svg width="12" height="15" viewBox="0 0 12 15"><path d="M6 0C10 4 9 11 1 14C7 14 12 10 11 5C10.500 3 8 1 6 0Z" fill="#111" /></svg></span>
    <span class="imebtn dots">·,</span>
    <span class="imebtn"><svg width="18" height="14" viewBox="0 0 18 14"><rect width="18" height="14" fill="#909090" /><path d="M1 3h16M1 6h16M1 9h16M1 12h16" stroke="#e8e8e8" stroke-dasharray="2 1" /></svg></span>
  </div>

  <!-- site banner stamped over the bottom right corner -->
  <div class="banner">
    <span class="bname">公式指标网</span>
    <svg width="80" height="80" viewBox="0 0 80 80">
      <path d="M6 46A34 34 0 0 1 74 40" fill="none" stroke="#d06a50" stroke-width="8" />
      <path d="M74 42A34 34 0 0 1 40 76" fill="none" stroke="#e8c850" stroke-width="8" />
      <path d="M33 6h14v14l6 4v18H27V24l6-4z" fill="#e8c850" />
      <path d="M30 46h22v16l-6 14H36l-6-14z" fill="#e8c850" />
      <path d="M30 30h20M40 22v20M32 52h18M40 46v24" stroke="#b07840" stroke-width="2" />
    </svg>
    <span class="burl">www.9m8.cn</span>
  </div>
</div>

<style>
  :global(body) { margin: 0; background: #000; }
  .app {
    position: relative;
    width: 2160px;
    height: 1395px;
    overflow: hidden;
    display: flex;
    flex-direction: column;
    background: #000;
    font-family: "Liberation Sans", "Noto Sans CJK SC", sans-serif;
    color: #c0c0c0;
  }

  /* menu bar */
  .menubar {
    height: 33px;
    flex: none;
    display: flex;
    align-items: center;
    background: #f2f2f2;
    border-bottom: 2px solid #a0a0a0;
    color: #333;
    font-size: 18px;
    white-space: nowrap;
  }
  .logo { margin-left: 5px; }
  .apptitle { margin-left: 4px; width: 126px; font-size: 18px; }
  .menu { display: flex; align-items: center; gap: 36px; margin-left: 48px; }
  .menuitem { position: relative; }
  .reddot { position: absolute; left: 44px; top: 3px; width: 6px; height: 6px; background: #f00000; }
  .login { color: #f01010; margin-left: 275px; font-size: 19px; }
  .login.stock { margin-left: 23px; }
  .menu2 { display: flex; gap: 21px; margin-left: 247px; }
  .clock { display: flex; gap: 10px; margin-left: 18px; height: 33px; align-items: center; padding: 0 3px 0 4px; border-left: 1px solid #c0c0c0; border-right: 1px solid #c0c0c0; }
  .time { font-size: 16px; letter-spacing: 1.400px; }
  .winbtns { display: flex; align-items: center; gap: 23px; margin-left: 22px; }

  .main { height: 1323px; flex: none; display: flex; }
  .left { width: 1787px; flex: none; display: flex; flex-direction: column; }

  /* period toolbar */
  .toolbar {
    height: 32px;
    flex: none;
    box-sizing: border-box;
    display: flex;
    align-items: center;
    border-bottom: 2px solid #a00000;
    font-size: 17px;
    white-space: nowrap;
  }
  .framebtn { width: 35px; height: 30px; box-sizing: border-box; border-right: 1px solid #a00000; display: flex; align-items: center; justify-content: center; }
  .frameicon { width: 13px; height: 14px; border: 2px solid #808080; border-radius: 2px; background: linear-gradient(90deg, #000 50%, #b0b0b0 50%, #b0b0b0 80%, #000 80%); }
  .periods { display: flex; gap: 16px; margin-left: 7px; }
  .periods .active { color: #00ffff; }
  .charttools { display: flex; margin-left: auto; height: 30px; }
  .charttools span {
    width: 52px;
    box-sizing: border-box;
    border-left: 1px solid #a00000;
    display: flex;
    align-items: center;
    justify-content: center;
  }
  .charttools span:last-child { width: 55px; border-right: 1px solid #a00000; }

  /* chart canvas */
  .chart { display: block; flex: none; }
  .grid { stroke: #b00000; stroke-width: 1.3; stroke-dasharray: 1.5 3.5; }
  .axis { stroke: #a80000; stroke-width: 1.3; }
  .axis.thick { stroke-width: 2; }
  .t17 { font-size: 17px; font-family: "Liberation Sans", "Noto Sans CJK SC", sans-serif; }
  .t16 { font-size: 16px; font-family: "Liberation Sans", sans-serif; }
  .cn { font-size: 17px; font-family: "Liberation Sans", "Noto Sans CJK SC", sans-serif; }
  .mid { text-anchor: middle; }
  .axlabel { font-size: 17.500px; font-family: "Liberation Sans", sans-serif; fill: #d83030; text-anchor: end; }
  .axlabel.mid { text-anchor: middle; fill: #c83030; }
  .date { font-size: 17px; font-family: "Liberation Sans", "Noto Sans CJK SC", sans-serif; fill: #d82020; }
  .mark { font-size: 16px; fill: #fff; text-anchor: middle; font-family: "Noto Sans CJK SC", sans-serif; }
  .wm1 { font-size: 30px; fill: #a80000; font-family: "Noto Sans CJK SC", serif; }
  .wm2 { font-size: 27px; fill: #a80000; font-weight: bold; font-family: "Liberation Sans", sans-serif; }

  /* tab rows */
  .tabs {
    height: 24px;
    flex: none;
    box-sizing: border-box;
    display: flex;
    border-bottom: 2px solid #a00000;
    font-size: 18px;
    white-space: nowrap;
  }
  .tabs span {
    box-sizing: border-box;
    padding-top: 4px;
    border-right: 2px solid #700000;
    display: flex;
    align-items: center;
    justify-content: center;
    line-height: 1;
  }
  .tabs .hidden-tab { margin-left: auto; width: 46px; margin-right: 76px; border-left: 1px solid #a00000; border-right: 1px solid #a00000; }
  .tabs.second { height: 28px; }
  .tabs.second span { padding-top: 7px; }
  .cyan { color: #00e8e8; }
  .olive { color: #c0c000; }

  /* quote panel */
  .panel {
    width: 336px;
    flex: none;
    box-sizing: border-box;
    border-left: 2px solid #a00000;
    padding: 0 0 0 2px;
    font-size: 22px;
    white-space: nowrap;
    overflow: hidden;
  }
  .name { height: 44px; box-sizing: border-box; padding-top: 2px; display: flex; align-items: center; gap: 6px; padding-left: 51px; }
  .zh { font-size: 28px; color: #00d8f0; line-height: 1; }
  .code { font-size: 19px; font-weight: bold; color: #b8b8b8; }
  .last {
    height: 41px;
    box-sizing: border-box;
    margin-left: -2px;
    display: flex;
    align-items: center;
    padding: 0 6px 0 6px;
    border-bottom: 2px solid #a00000;
    color: #00e600;
  }
  .big { font-size: 28px; font-weight: bold; }
  .chg { margin-left: 48px; margin-right: auto; }
  .tri { display: inline-block; width: 0; height: 0; border-left: 10px solid transparent; border-right: 10px solid transparent; border-top: 20px solid #00e600; margin-right: 1px; vertical-align: -1px; }
  .order { height: 27px; display: grid; grid-template-columns: 70px 90px 168px; align-items: center; }
  .lbl { font-size: 23px; line-height: 1; color: #c0c0c0; }
  .yen { font-style: normal; font-size: 18px; margin-left: 2px; }
  .paren { display: inline-block; width: 24px; transform: scaleX(0.66); transform-origin: left center; }
  b { font-size: 21px; font-weight: bold; text-align: right; line-height: 1; }
  .vol { color: #c0c000; }
  .wan { font-weight: normal; font-size: 22px; margin-left: 0; }
  .split { height: 3px; margin-left: -2px; background: linear-gradient(90deg, #b08030 93px, #3a70a8 93px); }
  .up0 { color: #00e600; }
  .red { color: #ff3232; }
  .mag { color: #c000c0; }
  .gray { color: #c0c0c0; }
  .yel { color: #c0c000; }
  .dim { color: #909090; }
  .line { border-top: 2px solid #a00000; margin-left: -2px; padding-left: 2px; }
  .stats { padding-top: 1px; }
  .stat { height: 28.700px; display: grid; grid-template-columns: 70px 90px 62px 106px; align-items: center; }
  .l2 { padding-left: 8px; }
  .extra { padding-top: 2px; padding-bottom: 5px; }
  .flows { padding-bottom: 2px; }
  .flow { height: 28.400px; display: grid; grid-template-columns: 140px 36px 93px 62px; align-items: center; }
  .barcell { display: flex; align-items: center; }
  .barcell i { display: block; background: #00e600; }
  .ticks { padding-top: 1px; }
  .tick { height: 27.050px; display: grid; grid-template-columns: 60px 95px 94px 48px 30px; align-items: center; }
  .tick b:first-child { text-align: left; }
  .tick b:nth-child(4) { text-align: center; }

  /* tool strip */
  .tools { width: 37px; flex: none; background: #f0f0f0; display: flex; flex-direction: column; align-items: center; }
  .tool { height: 34.600px; flex: none; display: flex; align-items: center; justify-content: center; }
  .ibox { fill: #fff; stroke: #4a90e0; stroke-width: 2; }
  .tbox {
    width: 23px;
    height: 22px;
    box-sizing: border-box;
    border: 2px solid #4a90e0;
    background: #fff;
    color: #1458c8;
    font-size: 13px;
    display: flex;
    align-items: center;
    justify-content: center;
    letter-spacing: -0.800px;
  }
  .orange { color: #f07020; font-size: 15px; }
  .fx { font-size: 11px; font-style: italic; border-radius: 6px; border-color: #30a0a0; }
  .rsi { color: #3040b0; font-size: 14px; font-weight: bold; letter-spacing: -0.500px; }
  .sbig { color: #d02020; font-size: 22px; font-weight: bold; line-height: 1; text-shadow: 1px 1px 1px #999; }
  .sep { height: 2px; width: 28px; background: #b8b8b8; flex: none; margin: 5px 0 5px; }
  .sep.second { margin: 4px 0; }
  .ptool { width: 100%; flex: none; display: flex; align-items: center; justify-content: center; color: #1458c8; font-size: 17px; }
  .ptool em { font-style: normal; }
  .ptool.on { background: #fff; }

  /* bottom index ticker */
  .status {
    height: 37px;
    flex: none;
    box-sizing: border-box;
    display: flex;
    align-items: center;
    background: #f2f2f2;
    border-top: 2px solid #d0d0d0;
    border-bottom: 3px solid #303030;
    color: #222;
    white-space: nowrap;
  }
  .sicon { width: 17px; height: 25px; margin: 0 3px 0 5px; box-sizing: border-box; border: 2px solid #d0a040; border-radius: 3px; background: linear-gradient(#f0d080, #e09030); flex: none; }
  .idx { display: flex; align-items: center; gap: 17px; flex: none; }
  .nm { font-size: 22px; width: 45px; margin-right: -8px; }
  .g { color: #008000; font-size: 20px; letter-spacing: 0.400px; }
  .amt { font-size: 20px; color: #111; letter-spacing: 0.300px; }
  .yi { font-size: 22px; }
  .total { display: flex; align-items: center; gap: 12px; border-left: 2px solid #c0c0c0; padding-left: 6px; height: 30px; }
  .total .nm { width: 68px; margin: 0; }

  /* floating IME bar */
  .ime {
    position: absolute;
    left: 1282px;
    top: 903px;
    height: 25px;
    box-sizing: border-box;
    padding: 3px;
    display: flex;
    gap: 1px;
    background: #f0f0e8;
    box-shadow: 0 1px 0 #909090;
  }
  .imebtn {
    width: 19px;
    box-sizing: border-box;
    background: #c8c8c8;
    border-right: 1px solid #666;
    border-bottom: 1px solid #666;
    display: flex;
    align-items: center;
    justify-content: center;
    font-size: 14px;
    color: #111;
  }
  .imebtn.a { color: #900000; font-family: "Liberation Serif", serif; font-weight: bold; font-size: 17px; }
  .imebtn.wide { width: 71px; font-size: 16.500px; }
  .imebtn.dots { font-weight: bold; }

  /* banner */
  .banner {
    position: absolute;
    right: 0;
    bottom: 0;
    width: 800px;
    height: 81px;
    background: #7ea9d6;
    display: flex;
    align-items: center;
    white-space: nowrap;
  }
  .banner svg { position: absolute; left: 321px; top: 1px; }
  .bname { margin-left: 16px; font-size: 55px; font-weight: 900; color: #1a0a8c; font-family: "Noto Sans CJK SC", sans-serif; line-height: 1; -webkit-text-stroke: 1px #1a0a8c; }
  .burl { position: absolute; left: 428px; top: 3px; font-size: 61px; font-weight: bold; color: #fff; font-family: "Liberation Serif", serif; line-height: 1.1; -webkit-text-stroke: 1px #fff; }
</style>
